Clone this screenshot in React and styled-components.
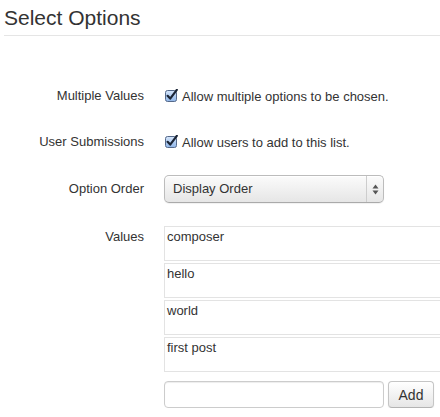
import React from 'react';
import styled, { createGlobalStyle } from 'styled-components';

const GlobalStyle = createGlobalStyle`
  html, body {
    margin: 0;
    padding: 0;
    background: #fff;
    overflow: hidden;
  }
  body {
    font-family: "Liberation Sans", Arial, Helvetica, sans-serif;
    font-size: 13px;
    color: #333;
  }
`;

const Page = styled.div`
  padding-left: 4px;
  width: 436px;
`;

const Title = styled.h2`
  margin: 0;
  padding: 6px 0 5px;
  font-size: 21px;
  font-weight: normal;
  line-height: 24px;
  color: #333;
  border-bottom: 1px solid #e5e5e5;
`;

const Form = styled.div`
  display: flex;
  flex-direction: column;
  gap: 20px;
  padding-top: 47px;
`;

const Row = styled.div`
  display: grid;
  grid-template-columns: 140px 1fr;
  column-gap: 20px;
  align-items: start;
  min-height: 26px;
`;

const Label = styled.div`
  text-align: right;
  padding-top: ${(p) => (p.$top ? p.$top : 4)}px;
  line-height: 18px;
`;

const CheckLabel = styled.label`
  display: flex;
  align-items: center;
  gap: 3px;
  padding-top: 5px;
  line-height: 18px;
  white-space: nowrap;
`;

const Box = styled.svg`
  flex: none;
  margin-left: 1px;
  margin-top: -2px;
`;

const SelectBox = styled.div`
  box-sizing: border-box;
  width: 220px;
  height: 28px;
  border: 1px solid #bcbcbc;
  border-bottom-color: #aaa;
  border-radius: 5px;
  background: linear-gradient(#fbfbfb, #e6e6e6);
  box-shadow: inset 0 1px 0 #fff, 0 1px 1px rgba(0, 0, 0, 0.06);
  display: flex;
  align-items: center;
  line-height: 18px;
`;

const SelectText = styled.span`
  flex: 1;
  padding-left: 8px;
`;

const SelectArrows = styled.span`
  width: 16px;
  align-self: stretch;
  border-left: 1px solid #cdcdcd;
  display: flex;
  align-items: center;
  justify-content: center;
`;

const ValueList = styled.div`
  display: flex;
  flex-direction: column;
  gap: 2px;
  margin-top: 3px;
`;

const ValueBox = styled.div`
  box-sizing: border-box;
  height: 35px;
  padding: 1px 2px;
  border: 1px solid #e3e3e3;
  border-right: 0;
  line-height: 18px;
`;

const AddRow = styled.div`
  display: flex;
  gap: 4px;
  margin-top: 9px;
`;

const TextInput = styled.input`
  box-sizing: border-box;
  width: 220px;
  height: 27px;
  border: 1px solid #ccc;
  border-radius: 4px;
  box-shadow: inset 0 1px 1px rgba(0, 0, 0, 0.075);
  font: inherit;
  padding: 4px 6px;
  outline: none;
`;

const Button = styled.button`
  box-sizing: border-box;
  width: 46px;
  height: 27px;
  border: 1px solid #c5c5c5;
  border-bottom-color: #b3b3b3;
  border-radius: 4px;
  background: linear-gradient(#fff, #e6e6e6);
  box-shadow: inset 0 1px 0 rgba(255, 255, 255, 0.2), 0 1px 2px rgba(0, 0, 0, 0.05);
  font: inherit;
  font-size: 14px;
  color: #333;
  padding: 0;
`;

function Checkbox() {
  return (
    <Box width="14" height="14" viewBox="0 0 14 14">
      <defs>
        <linearGradient id="cbfill" x1="0" y1="0" x2="0" y2="1">
          <stop offset="0" stopColor="#d6e6fb" />
          <stop offset="1" stopColor="#8fb5e8" />
        </linearGradient>
      </defs>
      <rect x="0.5" y="1.5" width="11" height="11" rx="2" fill="url(#cbfill)" stroke="#55698a" />
      <path d="M2.6 6.8 L5.2 9.6 L11.8 0.8" fill="none" stroke="#1b2536" strokeWidth="2.2" strokeLinecap="round" strokeLinejoin="round" />
    </Box>
  );
}

function Arrows() {
  return (
    <svg width="7" height="11" viewBox="0 0 7 11">
      <path d="M3.5 0.5 L6.5 4.5 L0.5 4.5 Z" fill="#555" />
      <path d="M3.5 10.5 L6.5 6.5 L0.5 6.5 Z" fill="#555" />
    </svg>
  );
}

const values = ['composer', 'hello', 'world', 'first post'];

export default function App() {
  return (
    <Page>
      <GlobalStyle />
      <Title>Select Options</Title>
      <Form>
        <Row>
          <Label>Multiple Values</Label>
          <CheckLabel>
            <Checkbox />
            Allow multiple options to be chosen.
          </CheckLabel>
        </Row>
        <Row>
          <Label>User Submissions</Label>
          <CheckLabel>
            <Checkbox />
            Allow users to add to this list.
          </CheckLabel>
        </Row>
        <Row>
          <Label $top={5}>Option Order</Label>
          <SelectBox>
            <SelectText>Display Order</SelectText>
            <SelectArrows>
              <Arrows />
            </SelectArrows>
          </SelectBox>
        </Row>
        <Row>
          <Label $top={5}>Values</Label>
          <div>
            <ValueList>
              {values.map((v) => (
                <ValueBox key={v}>{v}</ValueBox>
              ))}
            </ValueList>
            <AddRow>
              <TextInput type="text" />
              <Button>Add</Button>
            </AddRow>
          </div>
        </Row>
      </Form>
    </Page>
  );
}
